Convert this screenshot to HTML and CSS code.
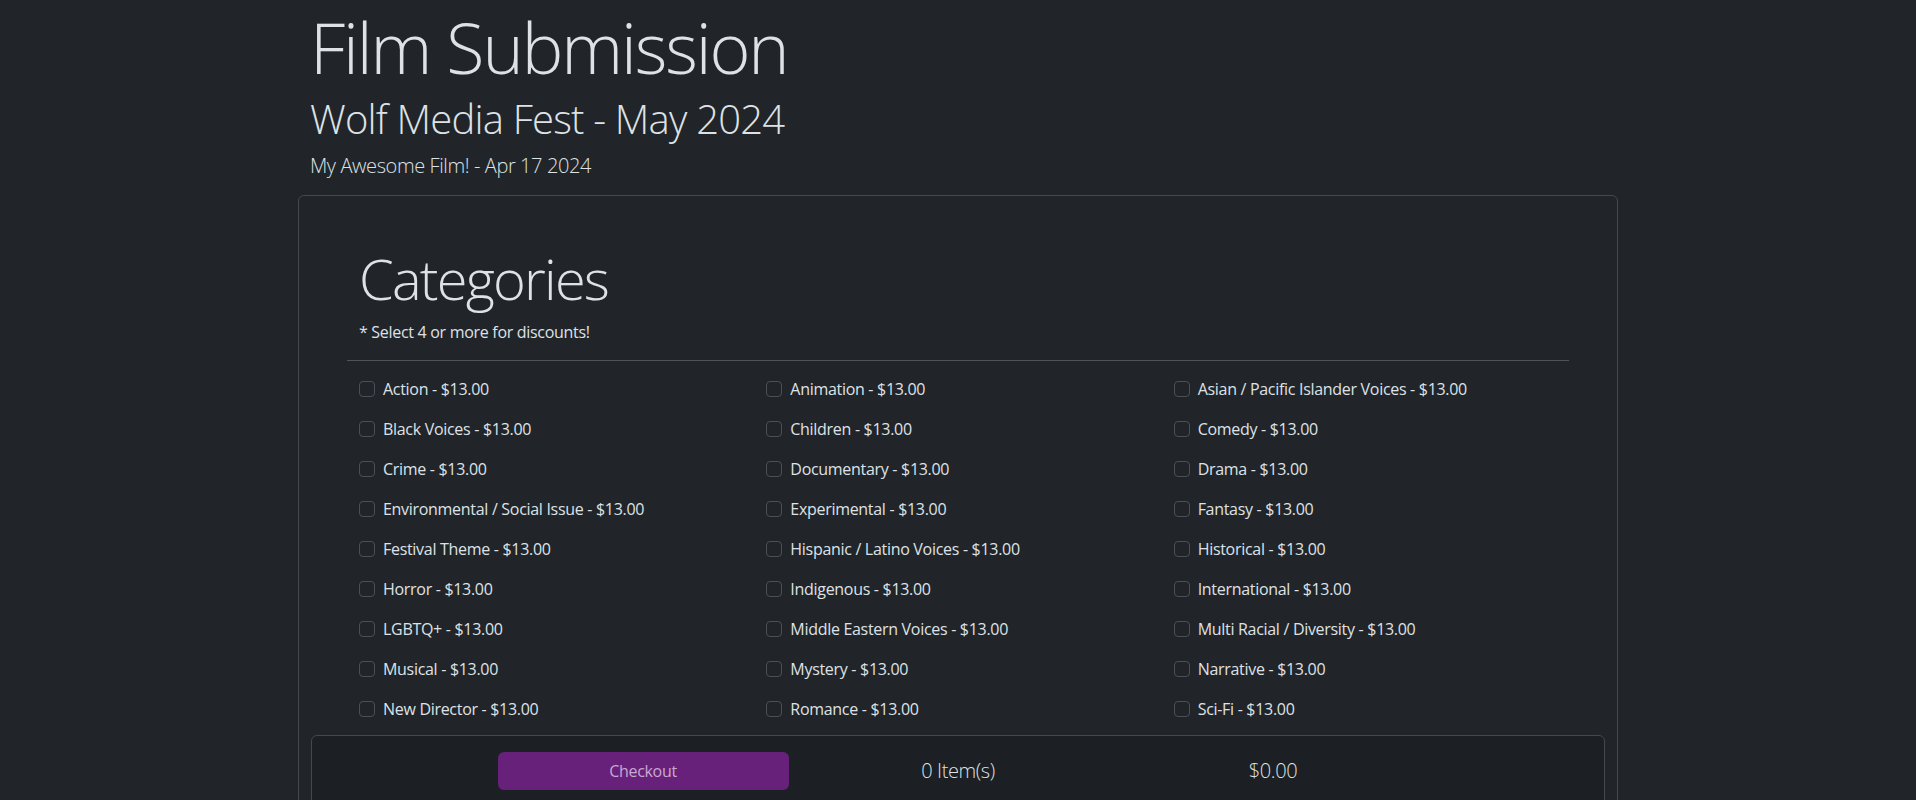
FILE: index.html
```html
<!DOCTYPE html>
<html lang="en">

<head>
    <meta charset="UTF-8">
    <meta name="viewport" content="width=device-width, initial-scale=1.0">
    <title>Film Submission</title>
    <link rel="stylesheet" href="styles.css">
</head>

<body>
    <div class="page">
        <div class="page-head">
            <h1 class="title">Film Submission</h1>
            <h2 class="festival">Wolf Media Fest - May 2024</h2>
            <p class="film">My Awesome Film! - Apr 17 2024</p>
        </div>

        <div class="card">
            <div class="card-body">
                <div class="section-head">
                    <h3>Categories</h3>
                    <p>* Select 4 or more for discounts!</p>
                </div>
                <hr>
                <div class="categories">
                    <label class="check"><input type="checkbox"> Action - $13.00</label>
                    <label class="check"><input type="checkbox"> Animation - $13.00</label>
                    <label class="check"><input type="checkbox"> Asian / Pacific Islander Voices - $13.00</label>
                    <label class="check"><input type="checkbox"> Black Voices - $13.00</label>
                    <label class="check"><input type="checkbox"> Children - $13.00</label>
                    <label class="check"><input type="checkbox"> Comedy - $13.00</label>
                    <label class="check"><input type="checkbox"> Crime - $13.00</label>
                    <label class="check"><input type="checkbox"> Documentary - $13.00</label>
                    <label class="check"><input type="checkbox"> Drama - $13.00</label>
                    <label class="check"><input type="checkbox"> Environmental / Social Issue - $13.00</label>
                    <label class="check"><input type="checkbox"> Experimental - $13.00</label>
                    <label class="check"><input type="checkbox"> Fantasy - $13.00</label>
                    <label class="check"><input type="checkbox"> Festival Theme - $13.00</label>
                    <label class="check"><input type="checkbox"> Hispanic / Latino Voices - $13.00</label>
                    <label class="check"><input type="checkbox"> Historical - $13.00</label>
                    <label class="check"><input type="checkbox"> Horror - $13.00</label>
                    <label class="check"><input type="checkbox"> Indigenous - $13.00</label>
                    <label class="check"><input type="checkbox"> International - $13.00</label>
                    <label class="check"><input type="checkbox"> LGBTQ+ - $13.00</label>
                    <label class="check"><input type="checkbox"> Middle Eastern Voices - $13.00</label>
                    <label class="check"><input type="checkbox"> Multi Racial / Diversity - $13.00</label>
                    <label class="check"><input type="checkbox"> Musical - $13.00</label>
                    <label class="check"><input type="checkbox"> Mystery - $13.00</label>
                    <label class="check"><input type="checkbox"> Narrative - $13.00</label>
                    <label class="check"><input type="checkbox"> New Director - $13.00</label>
                    <label class="check"><input type="checkbox"> Romance - $13.00</label>
                    <label class="check"><input type="checkbox"> Sci-Fi - $13.00</label>
                </div>
            </div>

            <div class="checkout-bar">
                <div class="checkout-col"><button class="checkout-btn" disabled>Checkout</button></div>
                <div class="checkout-col total">0 Item(s)</div>
                <div class="checkout-col total">$0.00</div>
            </div>
        </div>
    </div>
</body>

</html>
```

FILE: styles.css
```css
body {
    margin: 0;
    background-color: #212529;
    color: #dee2e6;
    font-family: 'Open Sans', 'Noto Sans', sans-serif;
    font-size: 16px;
    line-height: 1.5;
}

.page {
    width: 1320px;
    margin: 0 auto;
}

.page-head {
    padding: 0 12px;
}

.title {
    margin: 0;
    font-size: 70px;
    font-weight: 300;
    line-height: 95px;
    letter-spacing: -2.1px;
}

.festival {
    margin: 0 0 8px;
    font-size: 40px;
    font-weight: 300;
    line-height: 1.2;
    letter-spacing: -0.8px;
}

.film {
    margin: 0 0 14px;
    font-size: 20px;
    font-weight: 300;
    letter-spacing: -0.4px;
}

.card {
    border: 1px solid #45494e;
    border-radius: 6px;
    padding: 12px;
}

.card-body {
    padding: 37px 36px 0;
}

.section-head {
    padding: 0 12px;
}

.section-head h3 {
    margin: 0 0 8px;
    font-size: 56px;
    font-weight: 300;
    line-height: 1.2;
    letter-spacing: -1.8px;
}

.section-head p {
    margin: 0;
    letter-spacing: -0.3px;
}

hr {
    margin: 16px 0;
    border: 0;
    border-top: 1px solid #505458;
}

.categories {
    display: grid;
    grid-template-columns: repeat(3, 1fr);
    row-gap: 16px;
}

.check {
    display: flex;
    align-items: center;
    gap: 8px;
    padding: 0 12px;
    min-height: 24px;
    letter-spacing: -0.3px;
}

.check input {
    appearance: none;
    width: 16px;
    height: 16px;
    margin: 0;
    border: 1px solid #495057;
    border-radius: 4px;
    background: #212529;
    flex-shrink: 0;
}

.checkout-bar {
    display: flex;
    justify-content: center;
    align-items: center;
    margin-top: 14px;
    padding: 16px 0;
    border: 1px solid #45494e;
    border-radius: 6px;
    background: #1c1f23;
}

.checkout-col {
    width: 291px;
    padding: 0 12px;
    text-align: center;
}

.checkout-btn {
    width: 100%;
    height: 38px;
    border: none;
    border-radius: 6px;
    background-color: #68217a;
    color: #c9a8d1;
    font-family: inherit;
    font-size: 16px;
    letter-spacing: -0.3px;
}

.total {
    font-size: 20px;
    font-weight: 300;
    letter-spacing: -0.4px;
}
```
